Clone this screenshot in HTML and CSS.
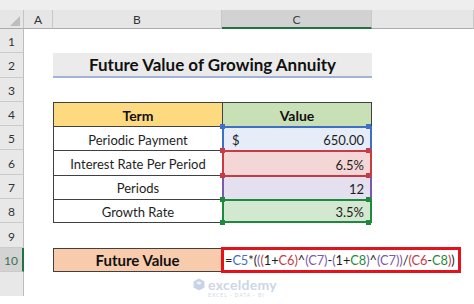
FILE: index.html
```html
<!DOCTYPE html>
<html>
<head>
<meta charset="utf-8">
<link rel="stylesheet" href="styles.css">
</head>
<body>
<div class="app">
  <div class="topbar"></div>
  <div class="sheet">
    <div class="corner"><span class="tri"></span></div>
    <div class="colh">A</div>
    <div class="colh">B</div>
    <div class="colh sel">C</div>
    <div class="colh"></div>

    <div class="rowh">1</div><div></div><div></div><div></div><div></div>

    <div class="rowh">2</div><div></div>
    <div class="title">Future Value of Growing Annuity</div>
    <div></div>

    <div class="rowh">3</div><div></div><div></div><div></div><div></div>

    <div class="rowh">4</div><div></div>
    <div class="t b hd term">Term</div>
    <div class="t c hd val">Value</div>
    <div></div>

    <div class="rowh">5</div><div></div>
    <div class="t b">Periodic Payment</div>
    <div class="t c c5"><span>$</span><span>650.00</span></div>
    <div></div>

    <div class="rowh">6</div><div></div>
    <div class="t b">Interest Rate Per Period</div>
    <div class="t c c6">6.5%</div>
    <div></div>

    <div class="rowh">7</div><div></div>
    <div class="t b">Periods</div>
    <div class="t c c7">12</div>
    <div></div>

    <div class="rowh">8</div><div></div>
    <div class="t b last">Growth Rate</div>
    <div class="t c c8 last">3.5%</div>
    <div></div>

    <div class="rowh">9</div><div></div><div></div><div></div><div></div>

    <div class="rowh act">10</div><div></div>
    <div class="fv">Future Value</div>
    <div class="edit"><div class="box"><span class="k">=</span><span class="bl">C5</span><span class="k">*(</span><span class="pu">(</span><span class="rd">(</span><span class="k">1+</span><span class="rd">C6)</span><span class="k">^</span><span class="pu">(C7)</span><span class="k">-</span><span class="pu">(</span><span class="k">1+</span><span class="gr">C8</span><span class="pu">)</span><span class="k">^</span><span class="pu">(C7))</span><span class="k">/</span><span class="rd">(C6</span><span class="k">-</span><span class="gr">C8</span><span class="rd">)</span><span class="k">)</span></div></div>

    <div class="rowh blank"></div><div></div><div></div><div></div><div></div>
  </div>
  <div class="mark">
    <svg width="12" height="13" viewBox="0 0 12 13"><path d="M6 0.5 L11.5 3.5 L11.5 9.5 L6 12.5 L0.5 9.5 L0.5 3.5 Z" fill="#c9d3e6"/><path d="M3 5 L6 3.3 L9 5 L6 6.7 Z" fill="#eef2f8"/></svg>
    <div class="mk">
      <span class="mname">exceldemy</span>
      <span class="msub">EXCEL · DATA · BI</span>
    </div>
  </div>
</div>
</body>
</html>
```

FILE: styles.css
```css
html, body {
  margin: 0;
  padding: 0;
  background: #ffffff;
}
body {
  font-family: Lato, "Open Sans", sans-serif;
  color: #1e1e1e;
}
.app {
  position: relative;
  width: 474px;
  height: 304px;
  overflow: hidden;
}
.topbar {
  height: 10px;
  background: #eeeeee;
}
.sheet {
  display: grid;
  grid-template-columns: 24px 29px 169px 150px 1fr;
  grid-template-rows: 19px repeat(11, 24.3px);
}
.sheet > div {
  box-sizing: border-box;
  min-width: 0;
}
.corner {
  background: #e6e6e6;
  border-right: 1px solid #c4c4c4;
  border-bottom: 1px solid #ababab;
  display: flex;
  align-items: flex-end;
  justify-content: flex-end;
  padding: 0 3px 2px 0;
}
.tri {
  width: 0;
  height: 0;
  border-left: 10px solid transparent;
  border-bottom: 10px solid #bdbdbd;
}
.colh {
  background: #e6e6e6;
  border-right: 1px solid #c8c8c8;
  border-bottom: 1px solid #ababab;
  display: flex;
  align-items: center;
  justify-content: center;
  font-size: 12px;
  color: #333;
  padding-top: 1px;
}
.colh.sel {
  background: #d2d2d2;
  border-bottom: 2px solid #217346;
  color: #444;
}
.rowh {
  background: #e8e8e8;
  border-right: 1px solid #bdbdbd;
  border-bottom: 1px solid #cbcbcb;
  display: flex;
  align-items: center;
  justify-content: center;
  font-size: 12px;
  color: #333;
  padding-top: 2px;
}
.rowh.act {
  background: #d3d3d3;
  border-right: 2px solid #217346;
  color: #3f6f55;
}
.rowh.blank {
  border-bottom: none;
}
.title {
  grid-column: span 2;
  background: #ebebeb;
  border-bottom: 2px solid #a3b2d9;
  display: flex;
  align-items: center;
  justify-content: center;
  font-weight: 700;
  font-size: 17px;
  color: #111;
  padding-top: 1px;
}
.t {
  border-top: 1px solid #404040;
  border-left: 1px solid #404040;
  display: flex;
  align-items: center;
  font-size: 13px;
  padding-top: 2px;
}
.t.b {
  justify-content: center;
}
.t.c {
  border-right: 1px solid #404040;
  justify-content: flex-end;
  padding-right: 6px;
  position: relative;
}
.t.last {
  border-bottom: 1px solid #404040;
}
.hd {
  font-weight: 700;
  font-size: 14px;
  color: #111;
}
.term { background: #fdd980; }
.t.c.val {
  background: #c8e0b6;
  justify-content: center;
  padding-right: 0;
}
.c5 {
  background: #e6edf8;
  border-top: 2px solid #3f6fc6 !important;
  border-left: 2px solid #3f6fc6 !important;
  border-right: 2px solid #3f6fc6 !important;
  justify-content: space-between !important;
  padding-left: 8px;
}
.c6 {
  background: #f4d6d6;
  border-top: 2px solid #c73b44 !important;
  border-left: 2px solid #c73b44 !important;
  border-right: 2px solid #c73b44 !important;
}
.c7 {
  background: #e5e0ef;
  border-top: 2px solid #c73b44 !important;
  border-left: 2px solid #7b5aab !important;
  border-right: 2px solid #7b5aab !important;
}
.c8 {
  background: #d3e8d0;
  border-top: 2px solid #1f8a3c !important;
  border-left: 2px solid #1f8a3c !important;
  border-right: 2px solid #1f8a3c !important;
  border-bottom: 2px solid #1f8a3c !important;
}
.c5::before, .c6::before, .c7::before, .c8::before, .c8::after {
  content: "";
  position: absolute;
  left: -4px;
  top: -4px;
  width: 5px;
  height: 5px;
}
.c5::before { background: #3f6fc6; box-shadow: 146px 0 0 #3f6fc6; }
.c6::before { background: #c73b44; box-shadow: 146px 0 0 #c73b44; }
.c7::before { background: #c73b44; box-shadow: 146px 0 0 #c73b44; }
.c8::before { background: #1f8a3c; box-shadow: 146px 0 0 #1f8a3c; }
.c8::after {
  top: auto;
  bottom: -4px;
  background: #1f8a3c;
  box-shadow: 146px 0 0 #1f8a3c;
}
.fv {
  background: #f8cbad;
  border: 1px solid #404040;
  display: flex;
  align-items: center;
  justify-content: center;
  font-weight: 700;
  font-size: 15px;
  color: #111;
  padding-top: 1px;
}
.edit {
  grid-column: span 2;
  display: flex;
  align-items: stretch;
  margin-left: -1px;
}
.box {
  border: 3px solid #e3121b;
  background: #ffffff;
  display: flex;
  align-items: center;
  padding: 1px 3px 0 1px;
  font-size: 12.8px;
  letter-spacing: -0.05px;
  white-space: nowrap;
  margin-top: -1px;
  margin-bottom: -1px;
}
.k { color: #1e1e1e; }
.bl { color: #3f6fc6; }
.rd { color: #c73b44; }
.pu { color: #7b5aab; }
.gr { color: #1f8a3c; }
.mark {
  position: absolute;
  left: 193px;
  top: 278px;
  display: flex;
  align-items: flex-start;
  gap: 3px;
}
.mk {
  display: flex;
  flex-direction: column;
  line-height: 1;
}
.mname {
  font-size: 14px;
  font-weight: 700;
  color: #cdd6e6;
  letter-spacing: 0.3px;
}
.msub {
  font-size: 5px;
  color: #d2d8e4;
  letter-spacing: 1px;
  margin-top: 1px;
}
```
